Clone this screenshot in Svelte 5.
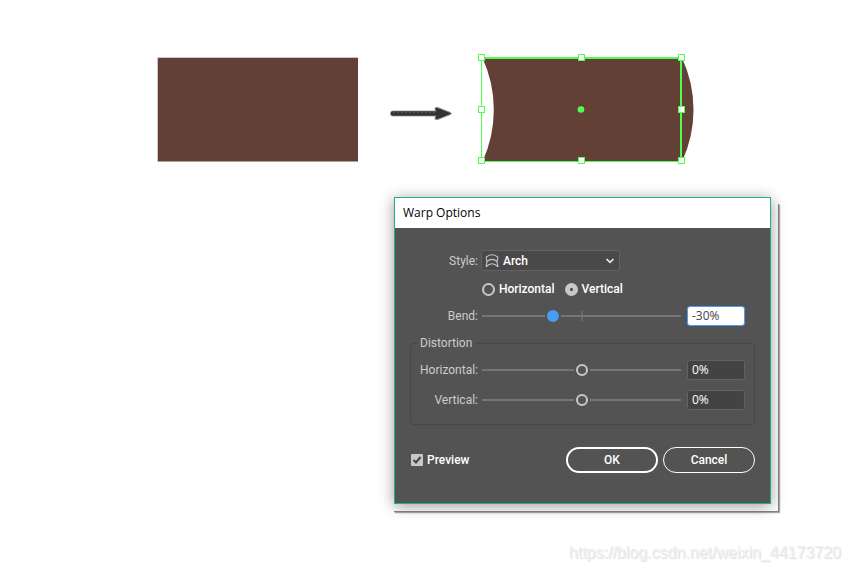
<script>
  let warpStyle = $state('Arch');
  let axis = $state('vertical');
  let bend = $state(-30);
  let horizontal = $state(0);
  let vertical = $state(0);
  let preview = $state(true);

  const handles = [
    [4, 4], [104, 4], [204, 4],
    [4, 56], [204, 56],
    [4, 107], [104, 107], [204, 107]
  ];
</script>

<main>
  <section class="artwork" aria-label="Rectangle before and after the warp">
    <svg width="202" height="105" viewBox="0 0 202 105">
      <rect x="0.7" y="0.7" width="200.3" height="103.8" fill="#624036" />
    </svg>
    <svg class="arrow" width="63" height="15" viewBox="0 0 63 15">
      <path d="M4 7.500H47" stroke="#a8a8a8" stroke-width="6" stroke-linecap="round" />
      <path d="M48 7.500L46 3.500Q45.500 1 48 1.200L61.500 6.500Q63 7.500 61.500 8.500L48 13.800Q45.500 14 46 11.500Z" fill="#333" stroke="#999" />
      <path d="M4 7.500H52" stroke="#333" stroke-width="4.500" stroke-linecap="round" />
      <path d="M4 6.500H47" stroke="#555" stroke-width="1" stroke-dasharray="2 2" />
    </svg>
    <svg width="218" height="111" viewBox="0 0 218 111">
      <path d="M4.500 4H204A122 122 0 0 1 204 107.500H4.500A124 124 0 0 0 4.500 4Z" fill="#624036" />
      <path d="M3.500 4V107" stroke="#4fff4f" fill="none" />
      <path d="M3 107.500H204" stroke="#4fff4f" fill="none" />
      <path d="M3 4H203V108" stroke="#4fff4f" stroke-width="2" fill="none" />
      <circle cx="103" cy="55.500" r="3.300" fill="#4fff4f" />
      {#each handles as [x, y]}
        <rect x={x - 3.5} y={y - 3.5} width="6" height="6" fill="#fff" stroke="#4fff4f" />
      {/each}
    </svg>
  </section>

  <div class="frame">
    <form class="dialog" aria-labelledby="dialog-title" onsubmit={(e) => e.preventDefault()}>
      <h1 id="dialog-title">Warp Options</h1>
      <div class="body">
        <div class="row">
          <label class="name" for="style">Style:</label>
          <div class="select">
            <svg width="14" height="14" viewBox="0 0 14 14" fill="none" stroke="#c8c8c8" stroke-width="1.100">
              <path d="M1 3.200Q7-1.600 13 3.200M2 7.600Q7 3.200 12 7.600M1 13Q7 6.500 13 13M1 3.200Q2.600 8 1 13M13 3.200Q11.400 8 13 13" />
            </svg>
            <select id="style" bind:value={warpStyle}>
              <option>Arch</option>
              <option>Arc</option>
              <option>Bulge</option>
            </select>
            <svg class="chevron" width="10" height="6" viewBox="0 0 10 6" fill="none" stroke="#eee" stroke-width="1.700">
              <path d="M1.500 1L5 4.300L8.500 1" />
            </svg>
          </div>
        </div>

        <div class="radios">
          <label><input type="radio" name="axis" value="horizontal" bind:group={axis} />Horizontal</label>
          <label><input type="radio" name="axis" value="vertical" bind:group={axis} />Vertical</label>
        </div>

        <div class="row">
          <label class="name" for="bend">Bend:</label>
          <input id="bend" class="bend" type="range" min="-100" max="100" bind:value={bend} />
          <input class="value active" type="text" aria-label="Bend value" value="{bend}%" />
        </div>

        <fieldset>
          <legend>Distortion</legend>
          <div class="row">
            <label class="name" for="horizontal">Horizontal:</label>
            <input id="horizontal" type="range" min="-100" max="100" bind:value={horizontal} />
            <input class="value" type="text" aria-label="Horizontal value" value="{horizontal}%" />
          </div>
          <div class="row">
            <label class="name" for="vertical">Vertical:</label>
            <input id="vertical" type="range" min="-100" max="100" bind:value={vertical} />
            <input class="value" type="text" aria-label="Vertical value" value="{vertical}%" />
          </div>
        </fieldset>

        <div class="footer">
          <label>
            <span class="check">
              <input type="checkbox" bind:checked={preview} />
              {#if preview}
                <svg width="12" height="12" viewBox="0 0 12 12" fill="none" stroke="#444" stroke-width="2">
                  <path d="M2.500 6L5 8.500L9.500 3" />
                </svg>
              {/if}
            </span>
            Preview
          </label>
          <button class="primary" type="submit">OK</button>
          <button type="button">Cancel</button>
        </div>
      </div>
    </form>
  </div>

  <p class="watermark">https://blog.csdn.net/weixin_44173720</p>
</main>

<style>
  :global(body) {
    background: #fff;
  }
  main {
    font-family: Roboto, "Noto Sans", sans-serif;
    font-size: 12px;
    line-height: 16px;
  }
  main :global(*) {
    box-sizing: border-box;
  }
  svg {
    display: block;
    flex: none;
  }
  .artwork {
    display: flex;
    align-items: flex-start;
    padding: 54px 0 32px 157px;
  }
  .artwork svg:first-child {
    margin-top: 3px;
  }
  .arrow {
    margin: 52px 26px 0 30px;
  }
  .frame {
    position: relative;
    width: fit-content;
    margin: 0 71px 0 auto;
    padding: 0 8px 8px 0;
  }
  .frame::before {
    content: "";
    position: absolute;
    inset: 7px 0 0;
    border: solid #858585;
    border-width: 0 1px 1px 0;
    box-shadow: 1px 1px 1px #aaa;
  }
  .dialog {
    position: relative;
    width: 377px;
    border: 1px solid #1fae94;
    background: #535353;
    box-shadow: 0 2px 14px rgba(0, 0, 0, 0.4);
  }
  h1 {
    margin: 0;
    padding: 7px 8px;
    background: #fff;
    color: #000;
    font-family: "Open Sans", "Noto Sans", sans-serif;
    font-size: 12px;
    line-height: 16px;
    font-weight: 400;
  }
  .body {
    padding: 22px 15px 30px;
    color: #fff;
    font-weight: 500;
  }
  .row {
    display: flex;
    align-items: center;
    padding-right: 10px;
  }
  .name {
    width: 68px;
    margin-right: 4px;
    text-align: right;
    color: #ccc;
    font-weight: 400;
  }
  .select {
    position: relative;
    display: flex;
    align-items: center;
    width: 139px;
    height: 21px;
    margin-left: -1px;
    padding-left: 3px;
    border: 1px solid #626262;
    border-radius: 3px;
    background: #494949;
  }
  select {
    appearance: none;
    flex: 1;
    height: 19px;
    padding: 0 4px;
    border: 0;
    background: transparent;
    color: #fff;
    font: inherit;
  }
  .chevron {
    position: absolute;
    right: 4px;
    pointer-events: none;
  }
  .radios {
    display: flex;
    gap: 10px;
    padding: 10px 0 9px 72px;
  }
  .radios label,
  .footer label {
    display: flex;
    align-items: center;
    gap: 4px;
  }
  input {
    margin: 0;
  }
  input[type="radio"] {
    appearance: none;
    width: 13px;
    height: 13px;
    border: 2px solid #c8c8c8;
    border-radius: 50%;
  }
  input[type="radio"]:checked {
    background: radial-gradient(circle, #4a4a4a 1px, #c8c8c8 2px);
  }
  input[type="range"] {
    appearance: none;
    flex: 1;
    min-width: 0;
    height: 14px;
    margin-right: 6px;
    background: linear-gradient(#757575, #757575) center / 100% 2px no-repeat;
  }
  input.bend {
    background:
      linear-gradient(#757575, #757575) center / 100% 2px no-repeat,
      linear-gradient(#686868, #686868) center / 2px 10px no-repeat;
  }
  input[type="range"]::-webkit-slider-thumb {
    appearance: none;
    width: 12px;
    height: 12px;
    border: 2px solid #c8c8c8;
    border-radius: 50%;
    background: #535353;
    box-shadow: 0 0 0 2px #535353;
  }
  input.bend::-webkit-slider-thumb {
    border-color: #469ef5;
    background: #469ef5;
  }
  .value {
    width: 58px;
    height: 20px;
    padding: 0 4px 2px;
    border: 1px solid #626262;
    border-radius: 3px;
    background: #434343;
    color: #fff;
    font: 12px "Open Sans", "Noto Sans", sans-serif;
  }
  .value.active {
    border-color: #469ef5;
    background: #fff;
    color: #444;
  }
  fieldset {
    min-width: 0;
    margin: 9px 0 22px;
    padding: 9px 0 14px;
    border: 1px solid #484848;
    border-radius: 3px;
  }
  fieldset .row {
    padding-right: 9px;
  }
  fieldset .row + .row {
    margin-top: 10px;
  }
  fieldset .name {
    width: 67px;
  }
  legend {
    margin-left: 6px;
    padding: 0 3px;
    color: #ccc;
    font-weight: 400;
  }
  .footer {
    display: flex;
    align-items: center;
    gap: 5px;
  }
  .footer label {
    margin-right: auto;
  }
  .check {
    position: relative;
    display: flex;
    margin-left: 1px;
  }
  .check svg {
    position: absolute;
    inset: 0;
    pointer-events: none;
  }
  input[type="checkbox"] {
    appearance: none;
    width: 12px;
    height: 12px;
    border-radius: 1px;
    background: #c8c8c8;
  }
  button {
    width: 92px;
    height: 26px;
    padding: 0;
    border: 1px solid #fff;
    border-radius: 13px;
    background: transparent;
    color: #fff;
    font: inherit;
  }
  .primary {
    border-width: 2px;
  }
  .watermark {
    margin: 0;
    padding: 31px 9px 0 0;
    color: #f0f0f0;
    text-shadow: 1px 1px 1px #ddd;
    font-family: "Liberation Sans", sans-serif;
    font-size: 16px;
    line-height: 20px;
    text-align: right;
  }
</style>
